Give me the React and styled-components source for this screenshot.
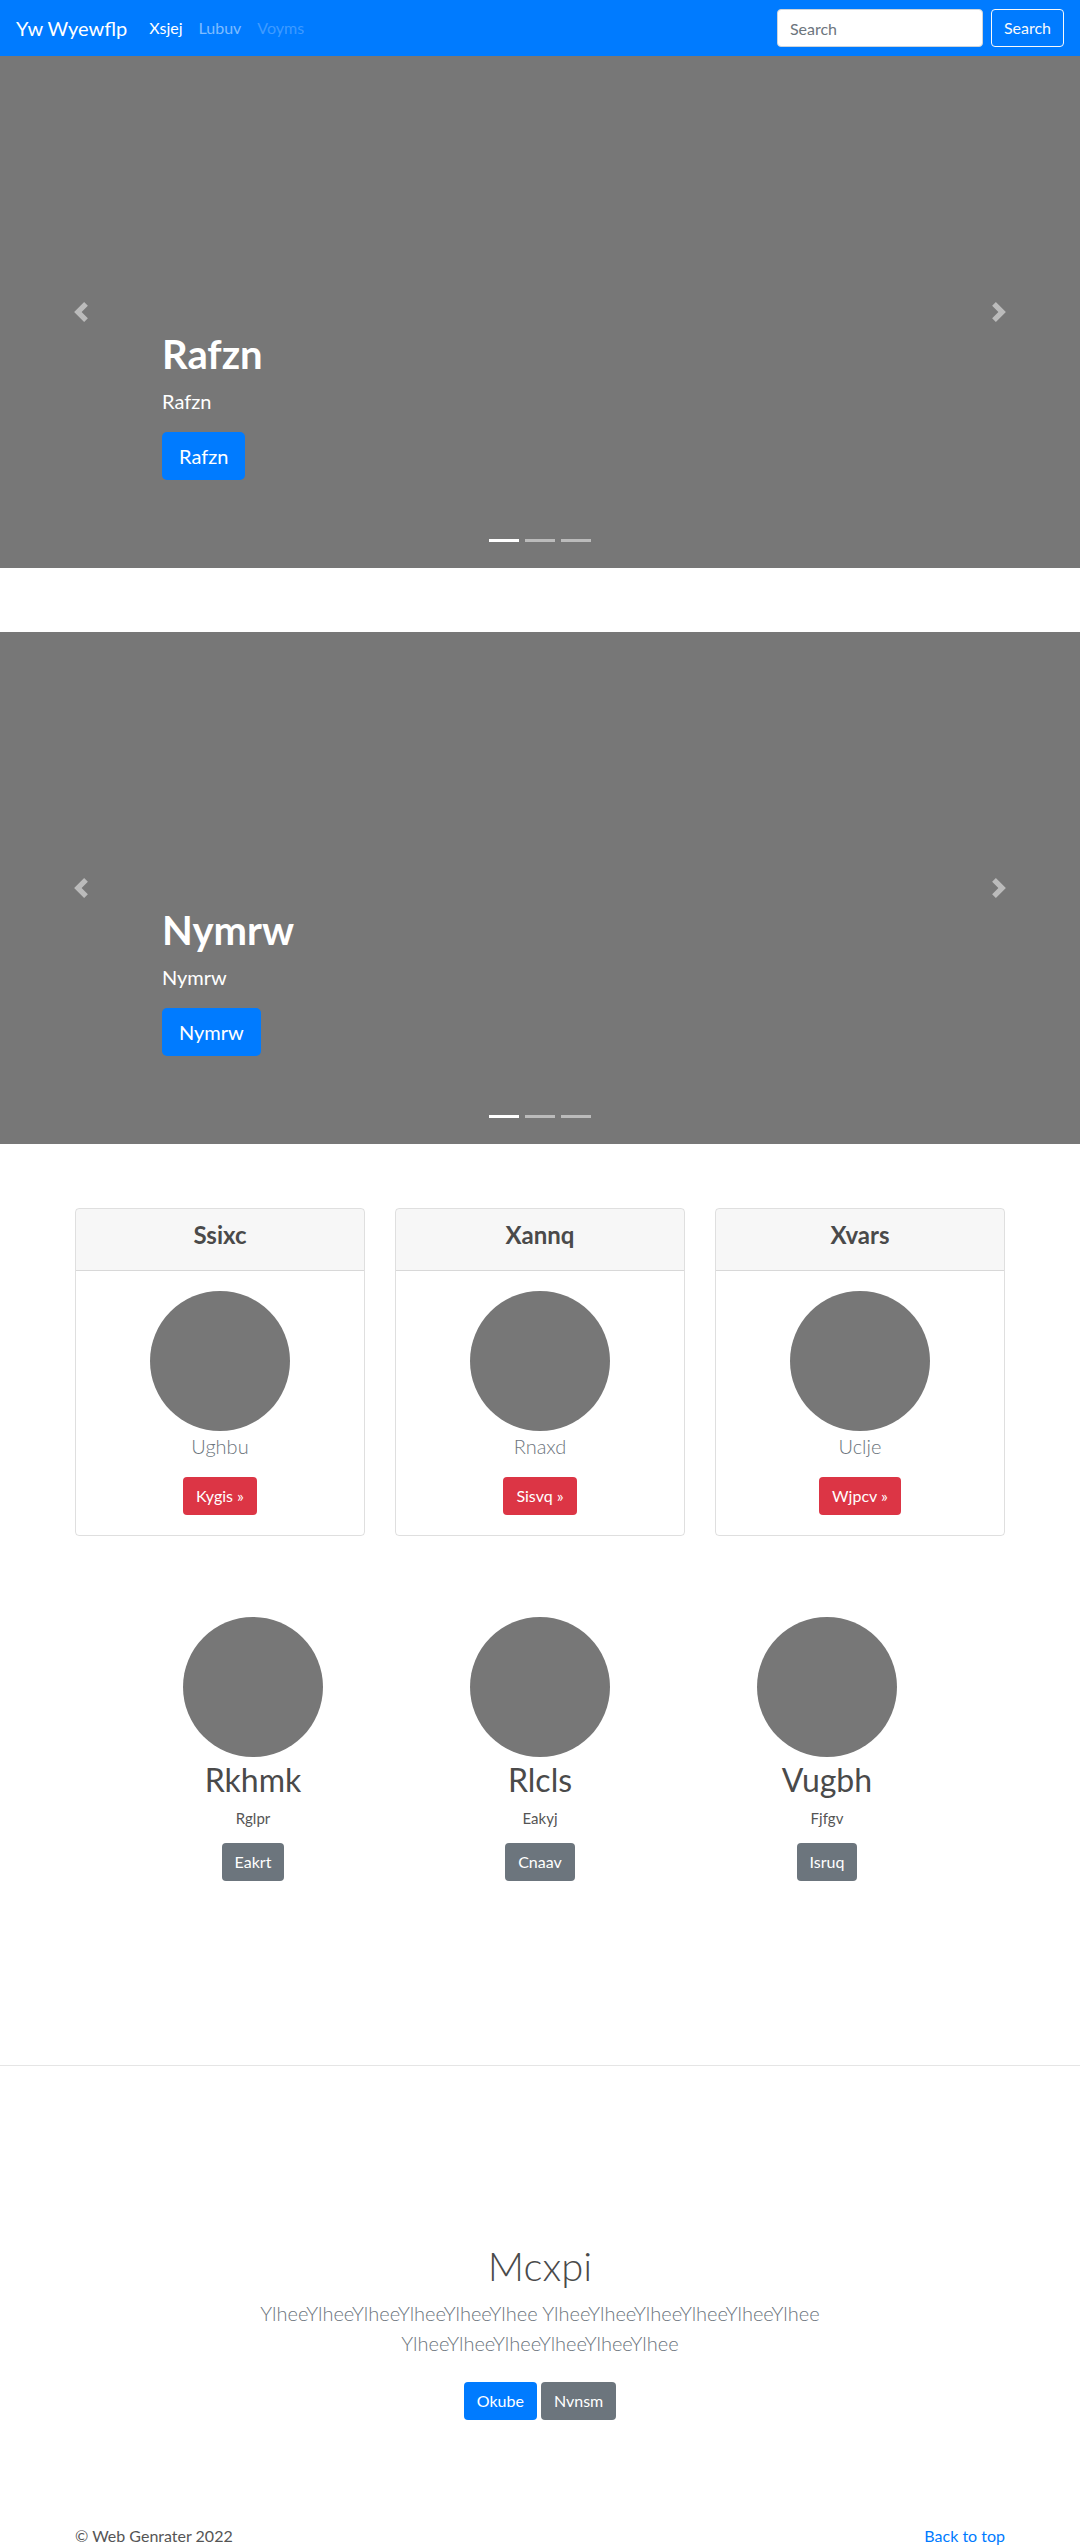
import React from "react";
import styled, { createGlobalStyle } from "styled-components";

const GlobalStyle = createGlobalStyle`
  * { box-sizing: border-box; }
  body {
    margin: 0;
    font-family: "Segoe UI", Lato, "Open Sans", Arial, sans-serif;
    font-size: 16px;
    line-height: 1.5;
    color: #555;
    background: #fff;
  }
`;

const Navbar = styled.nav`
  height: 56px;
  background: #007bff;
  display: flex;
  align-items: center;
  justify-content: space-between;
  padding: 8px 16px;
`;

const NavLeft = styled.div`
  display: flex;
  align-items: center;
`;

const Brand = styled.a`
  font-size: 20px;
  color: #fff;
  text-decoration: none;
  margin-right: 14px;
  line-height: 1.5;
`;

const NavList = styled.ul`
  display: flex;
  list-style: none;
  margin: 0;
  padding: 0;
`;

const NavLink = styled.a`
  display: block;
  padding: 8px;
  text-decoration: none;
  color: ${(p) =>
    p.$state === "active"
      ? "#fff"
      : p.$state === "disabled"
      ? "rgba(255,255,255,0.25)"
      : "rgba(255,255,255,0.5)"};
`;

const SearchForm = styled.form`
  display: flex;
  align-items: center;
`;

const SearchInput = styled.input`
  width: 206px;
  height: 38px;
  padding: 6px 12px;
  font: inherit;
  font-size: 16px;
  color: #495057;
  border: 1px solid #ced4da;
  border-radius: 4px;
  margin-right: 8px;
  &::placeholder { color: #6c757d; }
`;

const OutlineButton = styled.button`
  height: 38px;
  padding: 6px 12px;
  font: inherit;
  font-size: 16px;
  color: #f8f9fa;
  background: transparent;
  border: 1px solid #f8f9fa;
  border-radius: 4px;
`;

const Carousel = styled.div`
  position: relative;
  height: 512px;
  background: #777;
  margin-bottom: 64px;
`;

const Caption = styled.div`
  position: absolute;
  left: 15%;
  right: 15%;
  bottom: 48px;
  padding: 20px 0;
  color: #fff;
  text-align: left;
`;

const CaptionTitle = styled.h1`
  font-size: 40px;
  font-weight: 700;
  line-height: 1.2;
  margin: 0 0 8px;
`;

const CaptionText = styled.p`
  font-size: 20px;
  line-height: 1.5;
  margin: 0 0 16px;
`;

const CaptionAction = styled.p`
  margin: 0 0 20px;
`;

const Button = styled.a`
  display: inline-block;
  text-decoration: none;
  color: #fff;
  border-radius: ${(p) => (p.$lg ? "5px" : "4px")};
  font-size: ${(p) => (p.$lg ? "20px" : "16px")};
  line-height: 1.5;
  padding: ${(p) => (p.$lg ? "8px 16px" : "6px 12px")};
  border: 1px solid transparent;
  background: ${(p) =>
    p.$variant === "danger"
      ? "#dc3545"
      : p.$variant === "secondary"
      ? "#6c757d"
      : "#007bff"};
`;

const Control = styled.a`
  position: absolute;
  top: 0;
  bottom: 0;
  width: 15%;
  ${(p) => (p.$side === "prev" ? "left: 0;" : "right: 0;")}
  display: flex;
  align-items: center;
  justify-content: center;
  opacity: 0.5;
`;

const Indicators = styled.ol`
  position: absolute;
  left: 15%;
  right: 15%;
  bottom: 26px;
  margin: 0;
  padding: 0;
  list-style: none;
  display: flex;
  justify-content: center;
`;

const Indicator = styled.li`
  width: 30px;
  height: 3px;
  margin: 0 3px;
  background: ${(p) => (p.$active ? "#fff" : "rgba(255,255,255,0.5)")};
`;

const Container = styled.div`
  width: 930px;
  margin: 0 auto;
`;

const CardGrid = styled.div`
  display: grid;
  grid-template-columns: repeat(3, 1fr);
  gap: 30px;
`;

const Card = styled.div`
  border: 1px solid rgba(0, 0, 0, 0.125);
  border-radius: 4px;
  margin-bottom: 24px;
  overflow: hidden;
`;

const CardHeader = styled.div`
  background: rgba(0, 0, 0, 0.03);
  border-bottom: 1px solid rgba(0, 0, 0, 0.125);
  padding: 12px 20px;
  text-align: center;
`;

const CardTitle = styled.h4`
  font-size: 24px;
  font-weight: 700;
  line-height: 1.2;
  margin: 0 0 8px;
  color: #4a4a4a;
`;

const CardBody = styled.div`
  padding: 20px;
  text-align: center;
`;

const Circle = styled.div`
  width: 140px;
  height: 140px;
  border-radius: 50%;
  background: #777;
  margin: 0 auto ${(p) => p.$gap || 0}px;
`;

const Lead = styled.p`
  font-size: 20px;
  font-weight: 300;
  line-height: 1.5;
  color: #6c757d;
  margin: 0 0 16px;
`;

const Marketing = styled.div`
  width: 861px;
  margin: 57px auto 184px;
  display: grid;
  grid-template-columns: repeat(3, 1fr);
  text-align: center;
`;

const MarketingTitle = styled.h2`
  font-size: 32px;
  font-weight: 400;
  line-height: 1.2;
  margin: 0 0 8px;
  color: #4a4a4a;
`;

const SmallText = styled.p`
  font-size: 15px;
  line-height: 22px;
  margin: 0 0 14px;
`;

const Divider = styled.hr`
  border: 0;
  border-top: 1px solid rgba(0, 0, 0, 0.1);
  margin: 0;
`;

const Jumbotron = styled.section`
  padding: 176px 0 48px;
  text-align: center;
`;

const JumboInner = styled.div`
  max-width: 640px;
  margin: 0 auto;
  padding: 0 15px;
`;

const JumboTitle = styled.h1`
  font-size: 40px;
  font-weight: 300;
  line-height: 1.2;
  margin: 0 0 8px;
  color: #4a4a4a;
`;

const ButtonRow = styled.p`
  margin: 0;
  & > a { margin: 8px 0; }
`;

const Footer = styled.footer`
  padding: 48px 0;
`;

const FooterRow = styled.div`
  display: flex;
  justify-content: space-between;
  color: #555;
`;

const FooterLink = styled.a`
  color: #007bff;
  text-decoration: none;
`;

const PrevIcon = () => (
  <svg width="20" height="20" viewBox="0 0 8 8" fill="#fff">
    <path d="M5.25 0l-4 4 4 4 1.5-1.5-2.5-2.5 2.5-2.5-1.5-1.5z" />
  </svg>
);

const NextIcon = () => (
  <svg width="20" height="20" viewBox="0 0 8 8" fill="#fff">
    <path d="M2.75 0l-1.5 1.5 2.5 2.5-2.5 2.5 1.5 1.5 4-4-4-4z" />
  </svg>
);

const slides = ["Rafzn", "Nymrw"];

const cards = [
  { title: "Ssixc", text: "Ughbu", btn: "Kygis »" },
  { title: "Xannq", text: "Rnaxd", btn: "Sisvq »" },
  { title: "Xvars", text: "Uclje", btn: "Wjpcv »" },
];

const marketing = [
  { title: "Rkhmk", text: "Rglpr", btn: "Eakrt" },
  { title: "Rlcls", text: "Eakyj", btn: "Cnaav" },
  { title: "Vugbh", text: "Fjfgv", btn: "Isruq" },
];

const word = "Ylhee".repeat(6);

export default function App() {
  return (
    <>
      <GlobalStyle />
      <Navbar>
        <NavLeft>
          <Brand href="#">Yw Wyewflp</Brand>
          <NavList>
            <li><NavLink href="#" $state="active">Xsjej</NavLink></li>
            <li><NavLink href="#">Lubuv</NavLink></li>
            <li><NavLink href="#" $state="disabled">Voyms</NavLink></li>
          </NavList>
        </NavLeft>
        <SearchForm onSubmit={(e) => e.preventDefault()}>
          <SearchInput placeholder="Search" />
          <OutlineButton type="submit">Search</OutlineButton>
        </SearchForm>
      </Navbar>

      {slides.map((s) => (
        <Carousel key={s}>
          <Caption>
            <CaptionTitle>{s}</CaptionTitle>
            <CaptionText>{s}</CaptionText>
            <CaptionAction>
              <Button href="#" $lg>{s}</Button>
            </CaptionAction>
          </Caption>
          <Control href="#" $side="prev"><PrevIcon /></Control>
          <Control href="#" $side="next"><NextIcon /></Control>
          <Indicators>
            <Indicator $active />
            <Indicator />
            <Indicator />
          </Indicators>
        </Carousel>
      ))}

      <Container>
        <CardGrid>
          {cards.map((c) => (
            <Card key={c.title}>
              <CardHeader>
                <CardTitle>{c.title}</CardTitle>
              </CardHeader>
              <CardBody>
                <Circle />
                <Lead>{c.text}</Lead>
                <Button href="#" $variant="danger">{c.btn}</Button>
              </CardBody>
            </Card>
          ))}
        </CardGrid>
      </Container>

      <Marketing>
        {marketing.map((m) => (
          <div key={m.title}>
            <Circle $gap={4} />
            <MarketingTitle>{m.title}</MarketingTitle>
            <SmallText>{m.text}</SmallText>
            <Button href="#" $variant="secondary">{m.btn}</Button>
          </div>
        ))}
      </Marketing>

      <Divider />

      <Jumbotron>
        <JumboInner>
          <JumboTitle>Mcxpi</JumboTitle>
          <Lead>{`${word} ${word} ${word}`}</Lead>
          <ButtonRow>
            <Button href="#">Okube</Button>{" "}
            <Button href="#" $variant="secondary">Nvnsm</Button>
          </ButtonRow>
        </JumboInner>
      </Jumbotron>

      <Footer>
        <Container>
          <FooterRow>
            <span>© Web Genrater 2022</span>
            <FooterLink href="#">Back to top</FooterLink>
          </FooterRow>
        </Container>
      </Footer>
    </>
  );
}
